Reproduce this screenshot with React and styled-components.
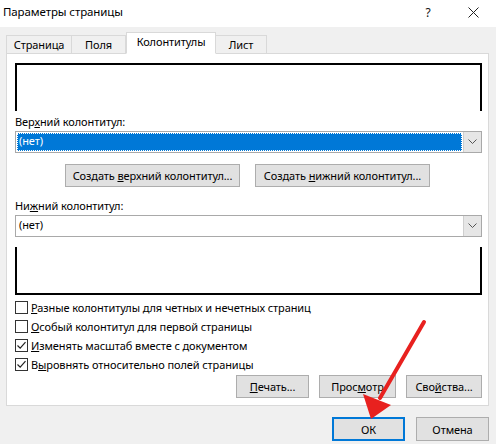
import styled, { createGlobalStyle } from "styled-components";

const GlobalStyle = createGlobalStyle`
  html, body {
    margin: 0;
    padding: 0;
    background: #f0f0f0;
  }
  body {
    font-family: "Noto Sans", "Open Sans", sans-serif;
    font-size: 11px;
    letter-spacing: -0.1px;
    color: #000;
  }
`;

const Dialog = styled.div`
  position: relative;
  width: 496px;
  height: 444px;
  background: #f0f0f0;
  overflow: hidden;
`;

const TitleBar = styled.div`
  height: 27px;
  background: #fff;
  display: flex;
  align-items: flex-start;
  padding: 0 13px 0 3px;
  & span.title {
    flex: 1;
    line-height: 24px;
    font-size: 11.5px;
  }
`;

const TitleIcon = styled.span`
  width: 20px;
  height: 24px;
  margin-left: ${(p) => p.ml || 0}px;
  display: flex;
  align-items: center;
  justify-content: center;
  font-size: 12px;
  color: #111;
`;

const Tabs = styled.div`
  display: flex;
  align-items: flex-end;
  height: 26px;
  margin-left: 6px;
`;

const Tab = styled.div`
  width: ${(p) => p.w}px;
  height: ${(p) => (p.active ? 22 : 18)}px;
  box-sizing: border-box;
  border: 1px solid #d9d9d9;
  border-left: ${(p) => (p.first || p.active ? "1px solid #d9d9d9" : "none")};
  border-bottom: ${(p) => (p.active ? "1px solid #fff" : "none")};
  background: ${(p) => (p.active ? "#fff" : "#f0f0f0")};
  margin-bottom: ${(p) => (p.active ? "-1px" : "0")};
  display: flex;
  align-items: center;
  justify-content: center;
  padding-bottom: ${(p) => (p.active ? 3 : 0)}px;
  position: relative;
  z-index: ${(p) => (p.active ? 1 : 0)};
`;

const Panel = styled.div`
  margin: 0 7px 0 6px;
  height: 353px;
  box-sizing: border-box;
  border: 1px solid #d9d9d9;
  background: #fff;
  padding: 9px 6px 0 8px;
  display: flex;
  flex-direction: column;
`;

const Preview = styled.div`
  height: 48px;
  box-sizing: border-box;
  border: 2px solid #000;
  ${(p) => (p.bottom ? "border-top: none;" : "border-bottom: none;")}
  margin-top: ${(p) => p.mt || 0}px;
`;

const Label = styled.div`
  height: 16px;
  line-height: 16px;
  margin-top: ${(p) => p.mt}px;
`;

const Combo = styled.div`
  height: 22px;
  margin-top: 1px;
  box-sizing: border-box;
  border: 1px solid #a9a9a9;
  display: flex;
  background: #fff;
`;

const ComboValue = styled.div`
  flex: 1;
  margin: 1px;
  padding-left: 2px;
  line-height: 16px;
  box-sizing: border-box;
  background: ${(p) => (p.selected ? "#0078d7" : "#fff")};
  color: ${(p) => (p.selected ? "#fff" : "#000")};
  outline: ${(p) => (p.selected ? "1px dotted #fff" : "none")};
  outline-offset: -1px;
`;

const ComboButton = styled.div`
  width: 17px;
  background: #e6e6e6;
  border-left: 1px solid #cfcfcf;
  display: flex;
  align-items: center;
  justify-content: center;
`;

const CenterRow = styled.div`
  display: flex;
  justify-content: center;
  gap: 15px;
  margin-top: 11px;
  padding-right: 2px;
`;

const Button = styled.div`
  width: ${(p) => p.w}px;
  height: ${(p) => p.h || 23}px;
  box-sizing: border-box;
  border: ${(p) => (p.primary ? "2px solid #0078d7" : "1px solid #adadad")};
  background: #e1e1e1;
  display: flex;
  align-items: center;
  justify-content: center;
  white-space: nowrap;
`;

const Checks = styled.div`
  margin-top: 3px;
  display: flex;
  flex-direction: column;
`;

const CheckRow = styled.div`
  height: 19px;
  display: flex;
  align-items: center;
  gap: 3px;
  white-space: nowrap;
`;

const Box = styled.div`
  width: 13px;
  height: 13px;
  box-sizing: border-box;
  border: 1px solid #333;
  background: #fff;
  display: flex;
  align-items: center;
  justify-content: center;
`;

const RightRow = styled.div`
  display: flex;
  justify-content: flex-end;
  gap: ${(p) => p.gap}px;
  margin-top: ${(p) => p.mt}px;
  margin-right: ${(p) => p.mr || 0}px;
`;

const Arrow = styled.svg`
  position: absolute;
  left: 0;
  top: 0;
  pointer-events: none;
`;

const Chevron = () => (
  <svg width="9" height="6" viewBox="0 0 9 6">
    <path d="M0.5 0.5 L4.5 4.5 L8.5 0.5" fill="none" stroke="#555" strokeWidth="1" />
  </svg>
);

const Check = ({ checked, children }) => (
  <CheckRow>
    <Box>
      {checked && (
        <svg width="11" height="11" viewBox="0 0 11 11">
          <path d="M1.5 5.5 L4.2 8.2 L9.5 2.2" fill="none" stroke="#222" strokeWidth="1.2" />
        </svg>
      )}
    </Box>
    <span>{children}</span>
  </CheckRow>
);

export default function App() {
  return (
    <Dialog>
      <GlobalStyle />
      <TitleBar>
        <span className="title">Параметры страницы</span>
        <TitleIcon>?</TitleIcon>
        <TitleIcon ml={25}>
          <svg width="11" height="11" viewBox="0 0 11 11">
            <path d="M0.5 0.5 L10.5 10.5 M10.5 0.5 L0.5 10.5" stroke="#222" strokeWidth="1" />
          </svg>
        </TitleIcon>
      </TitleBar>
      <Tabs>
        <Tab w={66} first>Страница</Tab>
        <Tab w={54}>Поля</Tab>
        <Tab w={90} active>Колонтитулы</Tab>
        <Tab w={51}>Лист</Tab>
      </Tabs>
      <Panel>
        <Preview />
        <Label mt={3}>
          Вер<u>х</u>ний колонтитул:
        </Label>
        <Combo>
          <ComboValue selected>(нет)</ComboValue>
          <ComboButton>
            <Chevron />
          </ComboButton>
        </Combo>
        <CenterRow>
          <Button w={175}>
            Создать&nbsp;<u>в</u>ерхний колонтитул...
          </Button>
          <Button w={175}>
            Создать&nbsp;<u>н</u>ижний колонтитул...
          </Button>
        </CenterRow>
        <Label mt={11}>
          Ни<u>ж</u>ний колонтитул:
        </Label>
        <Combo>
          <ComboValue>(нет)</ComboValue>
          <ComboButton>
            <Chevron />
          </ComboButton>
        </Combo>
        <Preview bottom mt={10} />
        <Checks>
          <Check>
            <u>Р</u>азные колонтитулы для четных и нечетных страниц
          </Check>
          <Check>
            <u>О</u>собый колонтитул для первой страницы
          </Check>
          <Check checked>
            <u>И</u>зменять масштаб вместе с документом
          </Check>
          <Check checked>
            В<u>ы</u>ровнять относительно полей страницы
          </Check>
        </Checks>
        <RightRow gap={10} mt={1}>
          <Button w={73}>
            <u>П</u>ечать...
          </Button>
          <Button w={77}>
            Прос<u>м</u>отр
          </Button>
          <Button w={76}>
            Сво<u>й</u>ства...
          </Button>
        </RightRow>
      </Panel>
      <RightRow gap={11} mt={11} mr={7}>
        <Button w={73} h={24} primary>
          ОК
        </Button>
        <Button w={73} h={24}>
          Отмена
        </Button>
      </RightRow>
      <Arrow width="496" height="444" viewBox="0 0 496 444">
        <line x1="424" y1="322" x2="380" y2="398" stroke="#e8211f" strokeWidth="4" strokeLinecap="round" />
        <polygon points="371,419 363,394 391,405" fill="#e8211f" />
      </Arrow>
    </Dialog>
  );
}
